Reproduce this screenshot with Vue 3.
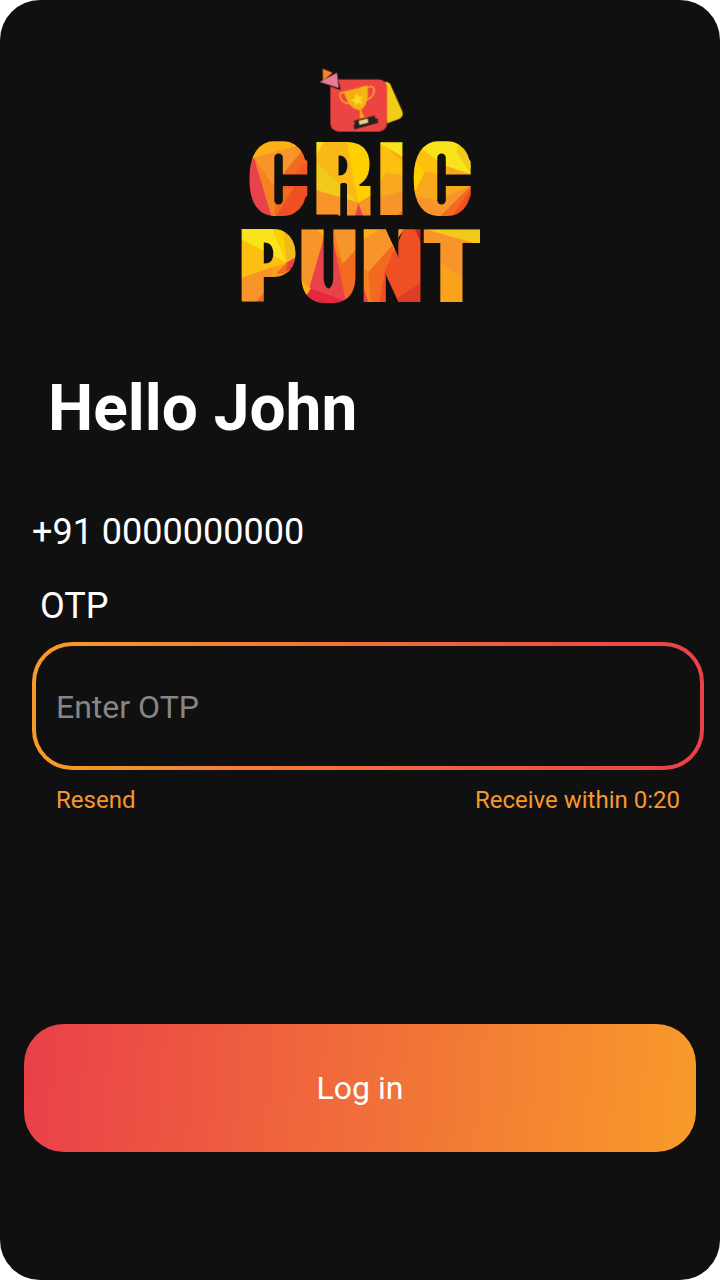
<script setup>
import { ref } from 'vue'

const otp = ref('')

// Facet artwork is drawn on a grid three times finer than the logo.
const tiles = [
  {
    t: 'translate(240 135) scale(.33333)',
    f: [
      ['#f7942a', '20,10 210,10 210,255 20,255'],
      ['#fbb015', '20,10 210,10 190,38 42,68 20,85'],
      ['#f7942a', '42,68 215,20 215,45 98,150'],
      ['#fdc50f', '20,30 40,40 42,68 20,85'],
      ['#f58220', '42,68 98,150 130,110 100,255'],
      ['#f26a21', '192,40 215,40 215,85 165,158 105,245 102,150'],
      ['#f15a22', '203,78 215,78 215,158 120,158'],
      ['#f04e23', '165,152 215,152 215,255 100,255'],
      ['#e8434a', '42,68 98,255 20,255 20,90'],
      ['#f9b916', '220,10 400,10 400,255 220,255'],
      ['#f9e11a', '220,10 258,10 220,75'],
      ['#ffd000', '318,10 400,10 400,180 355,203'],
      ['#fdc010', '362,10 400,10 400,65'],
      ['#f2ca1c', '220,75 355,203 220,163'],
      ['#f7942a', '220,163 355,203 400,178 400,255 220,255'],
      ['#e8434a', '355,205 370,245 345,245']
    ]
  },
  {
    t: 'translate(360 135) scale(.33333)',
    f: [
      ['#f9a91c', '50,10 140,10 140,255 50,255'],
      ['#fdc010', '50,10 140,90 140,122 80,112 50,150'],
      ['#f9e31a', '50,10 140,10 140,72 58,24'],
      ['#f7942a', '50,188 140,165 140,255 50,255'],
      ['#f26a21', '110,242 140,218 140,255 110,255'],
      ['#f9a91c', '150,10 340,10 340,255 150,255'],
      ['#fdc010', '150,10 225,10 250,90 240,118 195,108 158,60'],
      ['#ffd000', '150,55 195,108 150,200'],
      ['#f9e31a', '178,35 185,10 300,10 333,118 250,90'],
      ['#f2ca1c', '300,10 340,30 340,125 333,118 290,50'],
      ['#f7942a', '150,182 230,195 340,150 340,255 150,255'],
      ['#f26a21', '340,145 240,245 275,255 340,200'],
      ['#f04e23', '340,150 270,255 340,255']
    ]
  },
  {
    t: 'translate(236 222) scale(.33333)',
    f: [
      ['#f9a01e', '10,10 180,10 180,255 10,255'],
      ['#fdc010', '10,10 88,88 152,122 10,170'],
      ['#f9e31a', '10,10 105,10 152,122 10,48'],
      ['#ffd000', '105,10 145,10 152,122'],
      ['#f2b91c', '140,10 185,10 185,110 152,122'],
      ['#f7942a', '10,170 110,135 100,255 10,255'],
      ['#f26a21', '55,245 100,195 100,255 50,255'],
      ['#e8434a', '152,122 180,105 180,135 150,150'],
      ['#f26a21', '152,122 150,155 120,155'],
      ['#f7942a', '188,10 370,10 370,255 188,255'],
      ['#fbb015', '225,10 268,10 265,42'],
      ['#f26a21', '288,48 320,125 330,238 290,210'],
      ['#f58220', '284,10 290,10 320,125 288,70'],
      ['#f26a21', '370,72 320,125 330,245 370,245'],
      ['#e8434a', '265,42 290,48 330,240 215,215'],
      ['#fbb015', '188,168 225,200 210,225 188,215'],
      ['#e7273f', '225,200 330,238 330,255 190,255']
    ]
  },
  {
    t: 'translate(360 222) scale(.33333)',
    f: [
      ['#f7942a', '10,10 115,10 115,255 10,255'],
      ['#fbb015', '10,10 80,10 10,52'],
      ['#f26a21', '25,150 97,70 120,130 85,255 20,255'],
      ['#f58220', '25,150 35,255 10,255 10,140'],
      ['#e8434a', '10,195 30,255 10,255'],
      ['#f04e23', '75,145 115,60 135,10 190,10 190,255 55,255'],
      ['#f7942a', '112,10 140,10 112,52'],
      ['#dd3c27', '190,178 110,230 110,255 190,255'],
      ['#c4272e', '160,10 190,10 190,80'],
      ['#f7942a', '192,10 365,10 365,160 192,255'],
      ['#f9a21c', '230,115 320,175 320,255 230,255'],
      ['#f2ca1c', '192,10 365,10 365,70 205,24']
    ]
  }
]
</script>

<template>
  <main class="screen">
    <svg class="logo" viewBox="236 60 250 250" aria-label="Cric Punt">
      <defs>
        <filter id="heavy" filterUnits="userSpaceOnUse" x="230" y="130" width="260" height="185">
          <feMorphology operator="dilate" radius="4 0" />
        </filter>
        <mask id="wordmark" maskUnits="userSpaceOnUse" x="230" y="130" width="260" height="185">
          <g filter="url(#heavy)" class="word">
            <text transform="scale(.8 1)" x="347 428.5 489.3 552.5" y="215.5">CRIC</text>
            <text transform="scale(.8 1)" x="335 410.6 490 564.5" y="302.3">PUNT</text>
          </g>
          <!-- squared terminals and a straight leg -->
          <g fill="#fff">
            <rect x="269" y="151" width="20" height="56" />
            <rect x="283" y="160" width="24.3" height="37" rx="2" />
            <rect x="432" y="151" width="20" height="56" />
            <rect x="446" y="160" width="24.7" height="37" rx="2" />
            <rect x="338" y="186" width="32.7" height="29.5" />
          </g>
          <g fill="#000">
            <rect x="274.3" y="153.5" width="8.5" height="51" rx="4.2" />
            <rect x="281" y="174.5" width="28" height="11.5" />
            <rect x="437.3" y="153.5" width="8.5" height="51" rx="4.2" />
            <rect x="444" y="174.5" width="29" height="11.5" />
            <rect x="370.7" y="180" width="7" height="37" />
            <rect x="340.3" y="183" width="6.7" height="34" rx="2" />
          </g>
        </mask>
      </defs>

      <g mask="url(#wordmark)">
        <g v-for="tile in tiles" :key="tile.t" :transform="tile.t">
          <polygon v-for="(p, i) in tile.f" :key="i" :fill="p[0]" :points="p[1]" />
        </g>
      </g>

      <!-- trophy card -->
      <g transform="translate(310 60) scale(.33333)">
        <path d="M215 66h13q11 0 15 12l34 76q5 14-8 22l-38 14z" fill="#f3cd19" />
        <rect x="61" y="58" width="170" height="157" rx="25" fill="#ec4440" />
        <path d="M80 38l12 52-64-22z" fill="#101010" />
        <path d="M38 26l30 12-29 24z" fill="#f5842a" />
        <path d="M81 38l5 46-57-18z" fill="#e97b93" />
        <g fill="none" stroke="#f5a62b" stroke-width="5">
          <path d="M104 98q-19-3-13 14 7 20 31 18" />
          <path d="M170 84q17-11 22 3 3 23-24 33" />
        </g>
        <path d="M101 94q34-7 70-18 8 44-10 66-3 5-7 7 1 14 12 22l-17 4q3-12-1-25-32-2-47-56z" fill="#f9ab12" />
        <path d="M150 82l21-6q8 44-10 64-10 5-18 4 14-25 7-62z" fill="#f7b51b" />
        <path d="M139 98l6 12 14-2-8 12 7 12-14-3-9 11-1-14-14-5 13-5z" fill="#fbdc23" />
        <path d="M132 182l62-15 2 9 7-1 1 14-71 19-2-13 4-2z" fill="#252222" />
        <path d="M146 182l27-7 2 13-27 7z" fill="#edcf84" />
      </g>
    </svg>

    <h1 class="greeting">Hello John</h1>
    <p class="phone">+91 0000000000</p>
    <label class="label" for="otp">OTP</label>
    <div class="field">
      <input id="otp" v-model="otp" class="input" placeholder="Enter OTP" inputmode="numeric" />
    </div>
    <div class="hints">
      <span>Resend</span>
      <span>Receive within 0:20</span>
    </div>
    <button class="login" type="button">Log in</button>
  </main>
</template>

<style>
body {
  background: #fff;
}
</style>

<style scoped>
.screen {
  box-sizing: border-box;
  width: 720px;
  height: 1280px;
  display: flex;
  flex-direction: column;
  padding: 60px 16px 128px 24px;
  border-radius: 40px;
  background: #101010;
  color: #fff;
  font-family: Roboto, sans-serif;
  overflow: hidden;
}
.logo {
  width: 250px;
  height: 250px;
  flex: none;
  margin-left: 212px;
}
.word {
  fill: #fff;
  font-family: Roboto, sans-serif;
  font-weight: 900;
  font-size: 102.5px;
  text-anchor: middle;
}
.greeting {
  margin: 61px 0 0 24px;
  font-size: 64px;
  line-height: 75px;
  font-weight: 700;
}
.phone {
  margin: 65px 0 0 8px;
  font-size: 36px;
  line-height: 42px;
}
.label {
  margin: 32px 0 0 16px;
  font-size: 36px;
  line-height: 42px;
}
.field {
  box-sizing: border-box;
  height: 128px;
  margin: 15px 0 0 8px;
  border: 4px solid transparent;
  border-radius: 40px;
  background:
    linear-gradient(#101010, #101010) padding-box,
    linear-gradient(90deg, #f89b2a, #e94049) border-box;
}
.input {
  box-sizing: border-box;
  width: 100%;
  height: 100%;
  padding: 2px 20px 0;
  border: 0;
  outline: 0;
  background: none;
  color: #fff;
  font: 400 32px Roboto, sans-serif;
}
.input::placeholder {
  color: #868686;
  opacity: 1;
}
.hints {
  display: flex;
  justify-content: space-between;
  margin: 16px 24px 0 32px;
  font-size: 24px;
  line-height: 28px;
  color: #f7992a;
}
.login {
  height: 128px;
  margin: auto 8px 0 0;
  padding: 0;
  border: 0;
  border-radius: 40px;
  background: linear-gradient(95deg, #e94049, #f89b2a);
  color: #fff;
  font: 400 32px Roboto, sans-serif;
}
</style>
